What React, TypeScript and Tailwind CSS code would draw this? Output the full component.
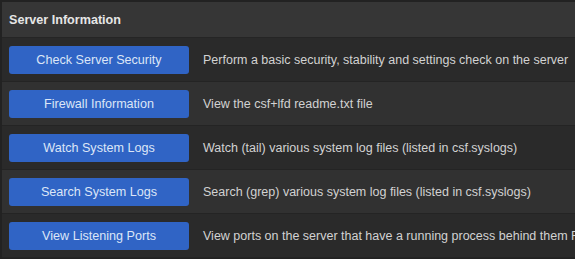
const rows = [
  { label: "Check Server Security", desc: "Perform a basic security, stability and settings check on the server" },
  { label: "Firewall Information", desc: "View the csf+lfd readme.txt file" },
  { label: "Watch System Logs", desc: "Watch (tail) various system log files (listed in csf.syslogs)" },
  { label: "Search System Logs", desc: "Search (grep) various system log files (listed in csf.syslogs)" },
  { label: "View Listening Ports", desc: "View ports on the server that have a running process behind them Further" },
];

export default function App() {
  return (
    <div
      className="w-[575px] h-[259px] overflow-hidden bg-[#222222] pt-[2px] pl-[2px]"
      style={{ fontFamily: '"Liberation Sans", Arial, sans-serif' }}
    >
      <div className="h-[36px] bg-[#363636] flex items-center px-[7px] pt-[1px] border-b border-[#252525]">
        <span className="text-[12.6px] font-bold text-[#e6e6e6]">Server Information</span>
      </div>
      {rows.map((r, i) => (
        <div
          key={r.label}
          className={`h-[44px] flex items-center pl-[7px] pt-[1px] border-b border-[#242424] whitespace-nowrap ${
            i % 2 === 0 ? "bg-[#2a2a2a]" : "bg-[#313131]"
          }`}
        >
          <button className="w-[180px] h-[28px] shrink-0 rounded-[3px] bg-[#3064c5] text-[12.6px] text-[#dce6f7]">
            {r.label}
          </button>
          <span className="ml-[14px] text-[12.5px] text-[#d2d2d2]">{r.desc}</span>
        </div>
      ))}
    </div>
  );
}
